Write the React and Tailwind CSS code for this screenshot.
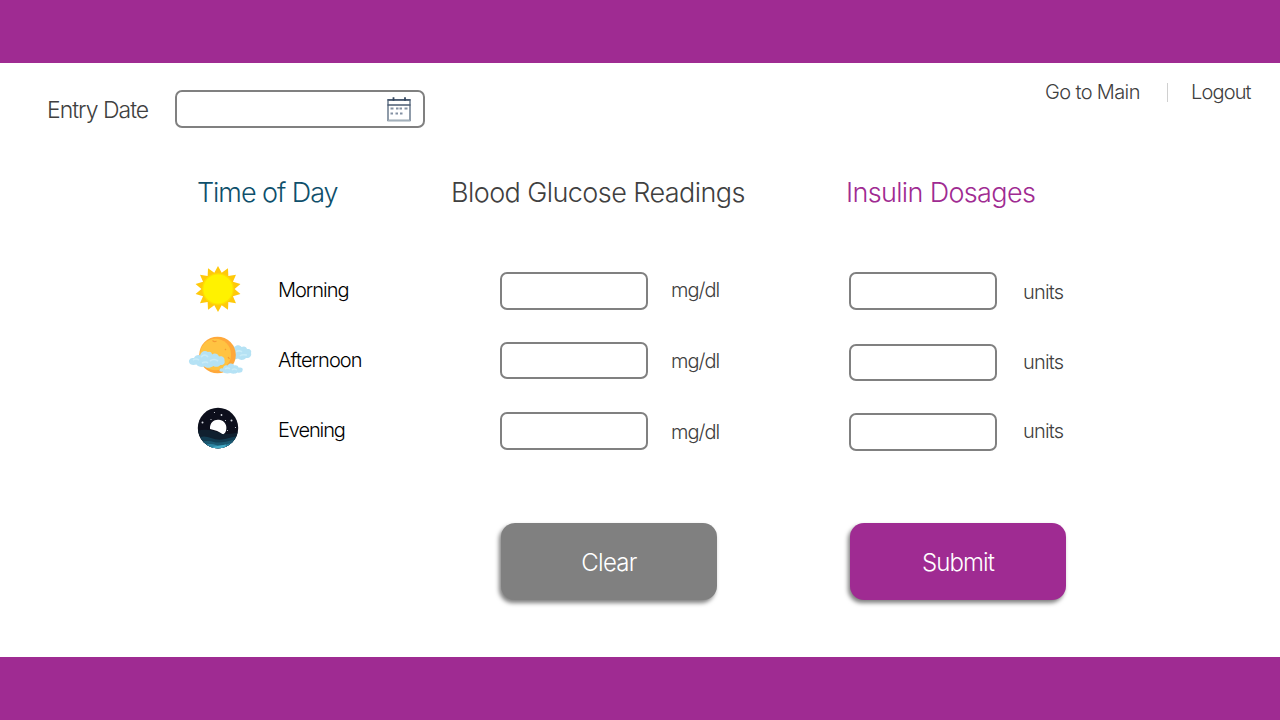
import React from "react";

const SUN_POINTS = Array.from({ length: 28 }, (_, i) => {
  const r = i % 2 === 0 ? 23 : 16.6;
  const a = (i * Math.PI) / 14;
  return `${(24 + r * Math.sin(a)).toFixed(2)},${(24 - r * Math.cos(a)).toFixed(2)}`;
}).join(" ");

function Sun() {
  return (
    <svg viewBox="0 0 48 48" className="h-12 w-12">
      <polygon points={SUN_POINTS} fill="#ffc90a" />
      <circle cx="24" cy="24" r="15.8" fill="#ffdf00" />
      <circle cx="24" cy="24" r="14.6" fill="#fff200" />
    </svg>
  );
}

function CloudySun() {
  return (
    <svg viewBox="0 0 64 40" className="h-10 w-16">
      <path d="M39 14.500c1-4 3-5.500 5-5.500 1.500 0 2 1 2.500 2 2-2.500 5.500-2 7 0 3-1.500 5 0 5.500 2 3-.5 5 1.500 4 4 1 3-1.500 5.500-5 5-2 2.500-6 2.500-8 .5-3 1.500-6 .5-7-1.500z" fill="#b5e2f4" />
      <path d="M48 16c2-2 5-1 6 0m-2 4c2-2 5-1 7-1" fill="none" stroke="#c8ecf8" strokeWidth="1.600" />
      <circle cx="29.500" cy="19" r="18.300" fill="#ffa83a" />
      <ellipse cx="27.500" cy="18.500" rx="15.500" ry="15.800" fill="#ffc342" />
      <path d="M24.500 4.500q2 2 4 .5M40 21l1.500 2M37 13l1 1" fill="none" stroke="#f59b32" strokeWidth="1.200" />
      <path d="M1 26c-.5-3 2.500-4.500 5-4 1-2.500 4-3.500 6-2.500 1-4 4.500-6 8-3.500 2-1 4 .5 4 2.500 3-2 6-.5 7 2 3-1 6 1 5.500 4 1 3-1.500 5-4 4.500-2 2-5 2.500-7 1-3 2-7 2.500-9 .5-3 1-7 0-8-2-4 1-7 0-7.500-2.500z" fill="#b5e2f5" />
      <path d="M5 24q3-2 6 0m2-3q4-4 7 0m2 4q4-3 8 0m-16 2q4-2 6 0" fill="none" stroke="#c9ebf8" strokeWidth="1.600" />
      <path d="M31.500 34.500c0-2 2-2.500 3.500-2 0-2.500 2.500-4 4.500-3 1.500-3 6-2.500 7 0 2-.5 3.500.5 4 2 3-.5 5 .5 4 3 0 2-3 2.500-5 2-2 1.500-5 1.500-7 .5-3 1-7 .5-8-1.500-1.500.5-3 0-3-1z" fill="#b5e2f5" />
      <path d="M37 33q3-2 5 0m2 1q2-2 5 0" fill="none" stroke="#c9ebf8" strokeWidth="1.400" />
    </svg>
  );
}

function Night() {
  return (
    <svg viewBox="0 0 42 42" className="h-[42px] w-[42px]">
      <defs>
        <clipPath id="night-disc">
          <circle cx="21" cy="21" r="20.200" />
        </clipPath>
      </defs>
      <g clipPath="url(#night-disc)">
        <rect width="42" height="42" fill="#0d0f1c" />
        <path d="M0 24q10-3 20 1t22 0v17H0z" fill="#10202f" />
        <path d="M0 31q7-3 14 0t14 1 14-3v13H0z" fill="#123c51" />
        <path d="M4 35q7-2 13 0t22-3v10H4z" fill="#1b5870" />
        <path d="M7 38q7-2 12 0t18-3v7H7z" fill="#2c83a0" />
        <path d="M12 40.500q9-1.500 17-3l-1 4.500H12z" fill="#46aac5" />
        <path d="M13 22C12.500 15 18 12 22 12.800c6 .7 8.500 6 7 11-.6 2.200-2 3.800-3.600 3.200Q21 23.500 13 22z" fill="#fff" />
        <g fill="#d5d8df">
          <circle cx="17.500" cy="5.500" r=".6" />
          <circle cx="24.500" cy="8" r=".9" />
          <circle cx="5.500" cy="15.500" r="1" />
          <circle cx="14" cy="12.500" r=".6" />
          <circle cx="34.500" cy="13.500" r="1" />
          <circle cx="28.500" cy="13.500" r=".6" />
          <circle cx="30.500" cy="23.500" r=".6" />
          <circle cx="38.500" cy="20.500" r=".6" />
        </g>
      </g>
    </svg>
  );
}

function Calendar() {
  return (
    <svg viewBox="0 0 26 26" className="h-[26px] w-[26px]" fill="none">
      <path d="M2 4h22v20.500H2z" stroke="#6b7b8d" strokeWidth="1.500" />
      <path d="M1.500 3.800h23M1.500 9h23" stroke="#4a5b72" strokeWidth="1.700" />
      <path d="M7.500 1.200v3.600M19 1.200v3.600" stroke="#34465e" strokeWidth="1.800" />
      <path d="M2 24.500h22" stroke="#a3b0bb" strokeWidth="1.500" />
      <path d="M4.500 12.500h3M10 12.500h2.500M13.500 12.500h2.500M18.500 12.500h3M4.500 17.500h2.500M9.500 17.500h2.500M14 17.500h2.500" stroke="#8491a3" strokeWidth="2" />
    </svg>
  );
}

const FIELD = "rounded-[7px] border-2 border-[#808080] bg-white outline-none";

const ROWS = [
  {
    name: "Morning", icon: <Sun />, iconBox: "ml-[194px] mt-[2.5px] w-[84px]",
    label: "mt-[14px] tracking-[-1px]", glucose: "mt-[10px] h-[38px]", mg: "mt-[14px]",
    insulin: "mt-[10px] h-[38px]", units: "mt-[16px]",
  },
  {
    name: "Afternoon", icon: <CloudySun />, iconBox: "ml-[188px] mt-[4px] w-[90px]",
    label: "mt-[14px] tracking-[-0.92px]", glucose: "mt-[10px] h-[37px]", mg: "mt-[15px]",
    insulin: "mt-[12px] h-[37px]", units: "mt-[16px]",
  },
  {
    name: "Evening", icon: <Night />, iconBox: "ml-[197px] mt-[5px] w-[81px]",
    label: "mt-[14px] tracking-[-1.1px]", glucose: "mt-[10px] h-[38px]", mg: "mt-[16px]",
    insulin: "mt-[11px] h-[38px]", units: "mt-[15px]",
  },
];

export default function App() {
  return (
    <div className="flex h-[720px] w-[1280px] flex-col overflow-hidden bg-white font-['Inter',sans-serif] font-light text-[#404040]">
      <header className="h-[63px] shrink-0 bg-[#9f2b92]" />
      <main className="flex h-[594px] shrink-0 flex-col whitespace-nowrap">
        <div className="flex h-[107px] items-start">
          <label htmlFor="entry-date" className="ml-[47px] mt-[31px] w-[128px] text-[23px] leading-8 tracking-[-1px]">Entry Date</label>
          <div className={`mt-[27px] flex h-[38px] w-[250px] items-center justify-end pr-[11px] ${FIELD}`}>
            <input id="entry-date" className="min-w-0 flex-1 outline-none" />
            <Calendar />
          </div>
          <nav className="ml-[620px] mt-[15px] flex items-center text-[20px] leading-7">
            <a className="w-[122px] tracking-[-0.63px]">Go to Main</a>
            <span className="mr-[23px] mt-px h-[19px] w-px bg-[#d0d0d0]" />
            <a className="tracking-[-0.85px]">Logout</a>
          </nav>
        </div>
        <div className="flex h-[92px] items-start pl-[197px] pt-[3px] text-[27px] leading-10">
          <h2 className="w-[254px] tracking-[-1.05px] text-[#0e4f6b]">Time of Day</h2>
          <h2 className="w-[395px] tracking-[-0.57px]">Blood Glucose Readings</h2>
          <h2 className="tracking-[-0.65px] text-[#9f2b92]">Insulin Dosages</h2>
        </div>
        {ROWS.map((row) => (
          <div key={row.name} className="flex h-[70px] items-start text-[20px] leading-7">
            <div className={`shrink-0 ${row.iconBox}`}>{row.icon}</div>
            <span className={`w-[222px] text-black ${row.label}`}>{row.name}</span>
            <input aria-label={`${row.name} glucose`} className={`w-[148px] ${FIELD} ${row.glucose}`} />
            <span className={`ml-[23px] w-[178px] tracking-[-1px] ${row.mg}`}>mg/dl</span>
            <input aria-label={`${row.name} insulin`} className={`w-[148px] ${FIELD} ${row.insulin}`} />
            <span className={`ml-[26px] tracking-[-0.8px] ${row.units}`}>units</span>
          </div>
        ))}
        <div className="mt-[51px] flex gap-[133px] pl-[501px] text-[24px] leading-8 text-white">
          <button className="h-[77px] w-[216px] rounded-[14px] bg-[#808080] pt-[3px] tracking-[-0.75px] shadow-[-2px_3px_4px_rgba(0,0,0,0.5)]">Clear</button>
          <button className="h-[77px] w-[216px] rounded-[14px] bg-[#9f2b92] pt-[3px] tracking-[-0.9px] shadow-[-2px_3px_4px_rgba(0,0,0,0.5)]">Submit</button>
        </div>
      </main>
      <footer className="h-[63px] shrink-0 bg-[#9f2b92]" />
    </div>
  );
}
